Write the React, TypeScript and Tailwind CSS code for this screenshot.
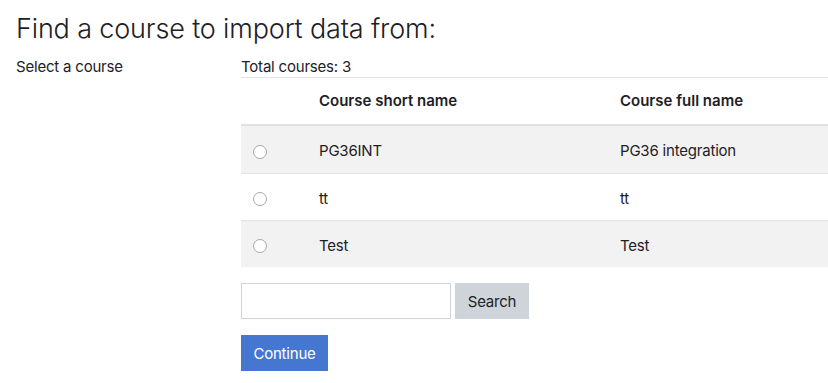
import React from "react";

const rows = [
  { short: "PG36INT", full: "PG36 integration", bg: "bg-[#f2f2f2]" },
  { short: "tt", full: "tt", bg: "bg-white" },
  { short: "Test", full: "Test", bg: "bg-[#f2f2f2]" },
];

function Radio() {
  return <div className="w-[14px] h-[14px] rounded-full border border-[#a8a8a8] bg-white" />;
}

export default function App() {
  return (
    <div className="w-[828px] h-[383px] overflow-hidden bg-white text-[#1d2125] text-[15px] tracking-[-0.2px]" style={{ fontFamily: "Inter, 'Noto Sans', sans-serif" }}>
      <div className="pl-4">
        <h2 className="pt-[13px] text-[27px] leading-[32px] font-light text-[#1d2125] tracking-[-0.15px]">
          Find a course to import data from:
        </h2>
        <div className="flex mt-[11px]">
          <div className="w-[225px] leading-[22px]">Select a course</div>
          <div className="flex-1">
            <div className="leading-[22px] h-[21px]">Total courses: 3</div>
            <div className="border-t border-[#dee2e6]">
              <div className="flex h-[48px] items-center border-b-2 border-[#dee2e6] font-semibold tracking-normal">
                <div className="w-[66px]" />
                <div className="w-[301px] pl-3">Course short name</div>
                <div className="flex-1 pl-3">Course full name</div>
              </div>
              {rows.map((r, i) => (
                <div
                  key={i}
                  className={`flex h-[47px] items-center ${r.bg} ${i > 0 ? "border-t border-[#dee2e6]" : ""}`}
                >
                  <div className="w-[66px] pl-3 pt-[4px]">
                    <Radio />
                  </div>
                  <div className="w-[301px] pl-3 pt-[4px]">{r.short}</div>
                  <div className="flex-1 pl-3 pt-[4px]">{r.full}</div>
                </div>
              ))}
            </div>
            <div className="flex gap-[4px] mt-[16px]">
              <div className="w-[210px] h-[36px] border border-[#ced4da] bg-white" />
              <button className="w-[74px] h-[36px] pt-[2px] bg-[#ced4da] text-[#1d2125] text-[15px]">Search</button>
            </div>
            <button className="mt-[16px] w-[87px] h-[36px] pt-[2px] bg-[#4677d0] text-white text-[15px]">Continue</button>
          </div>
        </div>
      </div>
    </div>
  );
}
